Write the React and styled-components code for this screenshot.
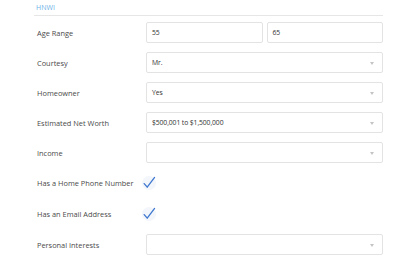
import React from 'react';
import styled, { createGlobalStyle } from 'styled-components';

const GlobalStyle = createGlobalStyle`
  html, body {
    margin: 0;
    padding: 0;
    background: #ffffff;
    font-family: "Open Sans", "Liberation Sans", sans-serif;
  }
`;

const Page = styled.div`
  width: 400px;
  height: 270px;
  overflow: hidden;
  box-sizing: border-box;
  padding: 3px 17px 0 34px;
`;

const SectionTitle = styled.div`
  font-size: 7px;
  line-height: 10px;
  color: #6fb3e8;
  padding: 0 0 2px 2px;
  border-bottom: 1px solid #e6e6e6;
`;

const Rows = styled.div`
  display: flex;
  flex-direction: column;
  gap: 9px;
  padding-top: 6px;
`;

const Row = styled.div`
  display: grid;
  grid-template-columns: 112px 1fr;
  align-items: center;
  height: ${p => (p.$short ? '22px' : '21px')};
`;

const Label = styled.div`
  font-size: 7.4px;
  color: #4a4a4a;
  padding-left: 3px;
  white-space: nowrap;
`;

const Pair = styled.div`
  display: grid;
  grid-template-columns: 1fr 1fr;
  gap: 4px;
`;

const Box = styled.div`
  position: relative;
  height: 21px;
  box-sizing: border-box;
  border: 1px solid #e3e3e3;
  border-radius: 2px;
  background: #fff;
  font-size: 6.8px;
  letter-spacing: -0.1px;
  color: #333;
  display: flex;
  align-items: center;
  padding-left: 5px;
`;

const Caret = styled.span`
  position: absolute;
  right: 8px;
  top: 9px;
  width: 0;
  height: 0;
  border-left: 2.5px solid transparent;
  border-right: 2.5px solid transparent;
  border-top: 3px solid #c4c4c4;
`;

const CheckWrap = styled.div`
  width: 14px;
  height: 14px;
  margin-left: -4px;
  border-radius: 50%;
  background: #f3f6fb;
  display: flex;
  align-items: center;
  justify-content: center;
`;

const Check = () => (
  <CheckWrap>
    <svg width="14" height="14" viewBox="0 0 14 14">
      <path d="M2.2 7.6 L5.2 11.2 L12.6 1.4" fill="none" stroke="#3f78cf" strokeWidth="1.3" strokeLinecap="round" strokeLinejoin="round" />
    </svg>
  </CheckWrap>
);

const Select = ({ value }) => (
  <Box>
    {value}
    <Caret />
  </Box>
);

export default function App() {
  return (
    <Page>
      <GlobalStyle />
      <SectionTitle>HNWI</SectionTitle>
      <Rows>
        <Row>
          <Label>Age Range</Label>
          <Pair>
            <Box>55</Box>
            <Box>65</Box>
          </Pair>
        </Row>
        <Row>
          <Label>Courtesy</Label>
          <Select value="Mr." />
        </Row>
        <Row>
          <Label>Homeowner</Label>
          <Select value="Yes" />
        </Row>
        <Row>
          <Label>Estimated Net Worth</Label>
          <Select value="$500,001 to $1,500,000" />
        </Row>
        <Row>
          <Label>Income</Label>
          <Select value="" />
        </Row>
        <Row $short>
          <Label>Has a Home Phone Number</Label>
          <Check />
        </Row>
        <Row $short>
          <Label>Has an Email Address</Label>
          <Check />
        </Row>
        <Row>
          <Label>Personal Interests</Label>
          <Select value="" />
        </Row>
      </Rows>
    </Page>
  );
}
